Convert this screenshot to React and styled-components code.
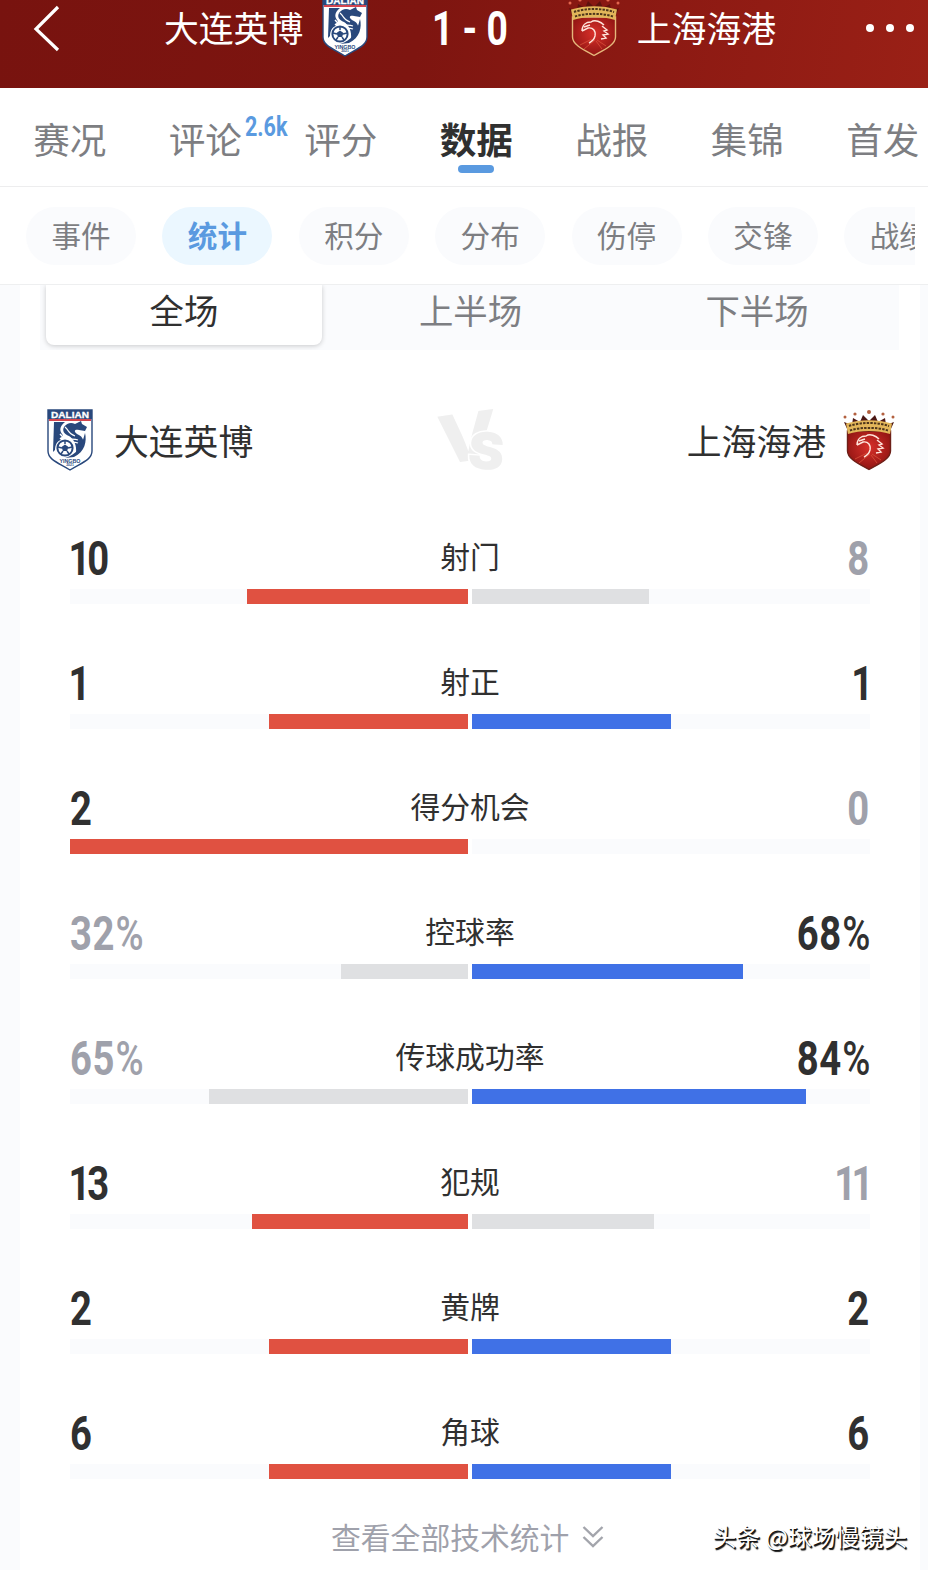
import React, { useState } from 'react';
import styled, { createGlobalStyle } from 'styled-components';

const COLORS = {
  dark: '#303030',
  grey: '#7d7e82',
  muted: '#9fa1ab',
  accent: '#5a9ae0',
  home: '#e05141',
  away: '#4071e6',
  weak: '#dfe0e2',
  soft: '#fafbfd',
};

const TABS = [
  { name: '赛况' },
  { name: '评论', count: '2.6k' },
  { name: '评分' },
  { name: '数据' },
  { name: '战报' },
  { name: '集锦' },
  { name: '首发' },
];

const FILTERS = ['事件', '统计', '积分', '分布', '伤停', '交锋', '战绩'];

const PERIODS = ['全场', '上半场', '下半场'];

const STATS = [
  { name: '射门', home: 10, away: 8 },
  { name: '射正', home: 1, away: 1 },
  { name: '得分机会', home: 2, away: 0 },
  { name: '控球率', home: 32, away: 68, percent: true },
  { name: '传球成功率', home: 65, away: 84, percent: true },
  { name: '犯规', home: 13, away: 11 },
  { name: '黄牌', home: 2, away: 2 },
  { name: '角球', home: 6, away: 6 },
];

const DalianCrest = () => (
  <CrestSvg width='46' height='62' viewBox='0 0 46 62'>
    <path d='M1 1H45V42C45 51 34 54 23 61C12 54 1 51 1 42Z' fill='#fff' stroke='#29487c' strokeWidth='1.4' />
    <path d='M1 1H45V10H1Z' fill='#29487c' />
    <path d='M2 10H44V12H2Z' fill='#d4454f' />
    <text x='23' y='8.6' textAnchor='middle' textLength='38' lengthAdjust='spacingAndGlyphs' fontFamily='Liberation Sans' fontWeight='700' fontSize='9' fill='#fff' stroke='#fff' strokeWidth='.3'>DALIAN</text>
    <path d='M7 13H18C13 17 12 21 15 25C18 28 12 27 14 31C10 32 8 36 8 41L6 43Z' fill='#29487c' />
    <path d='M17 18C20 14 24 13 28 15L34 12L35 15L40 18L38 22L32 21C28 20 26 22 30 25C37 28 38 33 34 39L29 44C30 37 27 30 22 27C17 25 15 22 17 18Z' fill='#29487c' />
    <path d='M13 25C18 32 25 29 31 31M13 29C18 35 25 32 31 34M18 18C23 22 20 24 28 27' fill='none' stroke='#fff' strokeWidth='1.3' />
    <path d='M38 24C40 32 38 43 27 48L18 49C30 45 34 39 38 24Z' fill='#29487c' />
    <circle cx='18' cy='39' r='7.6' fill='#fff' stroke='#29487c' strokeWidth='2' />
    <path d='M18 35.5L21.5 38L20 42H16L14.5 38Z' fill='#29487c' />
    <path d='M18 32V35M11 38L15 39M25 38L21 39M14 45L16 42M22 45L20 42' stroke='#29487c' strokeWidth='1.5' />
    <text x='23' y='53.5' textAnchor='middle' textLength='21' lengthAdjust='spacingAndGlyphs' fontFamily='Liberation Sans' fontWeight='700' fontSize='5' fill='#29487c'>YINGBO</text>
    <text x='23' y='57' textAnchor='middle' fontFamily='Liberation Sans' fontWeight='700' fontSize='3.4' fill='#29487c'>2021</text>
  </CrestSvg>
);

const PortCrest = ({ onDark }) => (
  <CrestSvg width='52' height='62' viewBox='0 0 52 62'>
    <defs>
      <radialGradient id='portShield' cx='50%' cy='42%' r='60%'>
        <stop offset='0' stopColor='#d8302a' />
        <stop offset='1' stopColor='#8f1412' />
      </radialGradient>
    </defs>
    <path d='M1 13L9 16L10 9L17 13L20 6L26 12L32 6L35 13L42 9L43 16L51 13L47 22H5Z' fill={onDark ? '#5e120e' : '#4b1714'} />
    <g fill={onDark ? '#e2664e' : '#b3603f'}>
      <circle cx='2' cy='8' r='1.5' />
      <circle cx='12' cy='5' r='1.6' />
      <circle cx='26' cy='3' r='2' />
      <circle cx='40' cy='5' r='1.6' />
      <circle cx='50' cy='8' r='1.5' />
    </g>
    <path d='M4.5 22H47.5V42C47.5 50 36 55 26 60.5C16 55 4.5 50 4.5 42Z' fill='url(#portShield)' stroke={onDark ? '#e5b77b' : '#6d2018'} strokeWidth='1.4' />
    <path d='M3 14.5C17 10 35 10 49 14.5L47 25C35 21 17 21 5 25Z' fill='#e2b65a' />
    <path d='M6 17C18 13 34 13 46 17M7 21.5C18 18 34 18 45 21.5' fill='none' stroke='#4d351b' strokeWidth='2' strokeDasharray='2.4 1.2' />
    <path d='M14 36C14 30 18 27 23 27C27 24 33 27 36 30M14 36L20 33C25 32 28 36 27 41C26 45 23 47 21 48M16 32L22 30M34 31L39 35L36 36L40 39L35 40L38 43L33 44' fill='none' stroke='#ffe5dc' strokeWidth='1.4' />
    <path d='M12 50L24 44M16 54L27 45M38 51L29 45M34 54L28 46' stroke='#d9513a' strokeWidth='.8' />
  </CrestSvg>
);

const Value = ({ value, percent, weak, right }) => (
  <ValueText $weak={weak} $right={right}>
    {String(value).split('').map((digit, index) => (
      <Digit key={index} $narrow={digit === '1'}>{digit}</Digit>
    ))}
    {percent && <Percent>%</Percent>}
  </ValueText>
);

const StatRow = ({ name, home, away, percent }) => {
  const total = percent ? 100 : home + away;

  return (
    <Row>
      <RowHead>
        <Value value={home} percent={percent} weak={home < away} />
        <RowName>{name}</RowName>
        <Value value={away} percent={percent} weak={away < home} right />
      </RowHead>
      <Bars>
        <Track $left>
          <Fill $color={home < away ? COLORS.weak : COLORS.home} style={{ width: `${(home / total) * 100}%` }} />
        </Track>
        <Track>
          <Fill $color={away < home ? COLORS.weak : COLORS.away} style={{ width: `${(away / total) * 100}%` }} />
        </Track>
      </Bars>
    </Row>
  );
};

const App = () => {
  const [tab, setTab] = useState(3);
  const [filter, setFilter] = useState(1);
  const [period, setPeriod] = useState(0);

  return (
    <Page>
      <GlobalStyle />
      <Header>
        <Back>
          <svg width='28' height='48' viewBox='0 0 28 48' fill='none' stroke='#fff' strokeWidth='3.2'>
            <path d='M25 3L3 25L25 46' />
          </svg>
        </Back>
        <HeaderTeam>
          <HeaderName>大连英博</HeaderName>
          <DalianCrest />
        </HeaderTeam>
        <Score>
          <ScoreText>1 - 0</ScoreText>
        </Score>
        <HeaderTeam>
          <PortCrest onDark />
          <HeaderName>上海海港</HeaderName>
        </HeaderTeam>
        <More>
          <Dot />
          <Dot />
          <Dot />
        </More>
      </Header>

      <Tabs>
        {TABS.map((item, index) => (
          <Tab key={item.name} $active={index === tab} onClick={() => setTab(index)}>
            {item.name}
            {item.count && <Count>{item.count}</Count>}
          </Tab>
        ))}
      </Tabs>

      <Filters>
        <FilterList>
          {FILTERS.map((item, index) => (
            <Pill key={item} $active={index === filter} onClick={() => setFilter(index)}>
              {item}
            </Pill>
          ))}
        </FilterList>
      </Filters>

      <Card>
        <Periods>
          {PERIODS.map((item, index) => (
            <Period key={item} $active={index === period} onClick={() => setPeriod(index)}>
              {item}
            </Period>
          ))}
        </Periods>

        <Teams>
          <Team>
            <DalianCrest />
            大连英博
          </Team>
          <svg width='72' height='72' viewBox='0 0 72 72' fill='#efefef' fontFamily='Inter, sans-serif' fontWeight='800'>
            <text transform='translate(4 61) rotate(-8) skewX(-4)' fontSize='66' textLength='60' lengthAdjust='spacingAndGlyphs'>V</text>
            <text transform='translate(32 64) rotate(4)' fontSize='51' textLength='36' lengthAdjust='spacingAndGlyphs' fontWeight='900' stroke='#fff' strokeWidth='3' paintOrder='stroke'>S</text>
          </svg>
          <Team $right>
            上海海港
            <PortCrest />
          </Team>
        </Teams>

        <Stats>
          {STATS.map((item) => (
            <StatRow key={item.name} {...item} />
          ))}
        </Stats>

        <ShowAll>
          查看全部技术统计
          <svg width='22' height='26' viewBox='0 0 22 26' fill='none' stroke='#a3a5ac' strokeWidth='2.4'>
            <path d='M1.5 4L11 13L20.5 4M1.5 14L11 23L20.5 14' />
          </svg>
        </ShowAll>
      </Card>

      <Watermark>头条 @球场慢镜头</Watermark>
    </Page>
  );
};

const GlobalStyle = createGlobalStyle`
  * {
    box-sizing: border-box;
  }

  body {
    margin: 0;
    background-color: ${COLORS.soft};
    font-family: 'Noto Sans CJK SC', sans-serif;
    color: ${COLORS.dark};
  }

  button {
    padding: 0;
    border: none;
    background: none;
    font-family: inherit;
    cursor: pointer;
  }
`;

const Page = styled.div`
  position: relative;
  width: 928px;
  height: 1570px;
  overflow: hidden;
`;

const CrestSvg = styled.svg`
  flex: none;
`;

const Header = styled.header`
  display: grid;
  grid-template-columns: 164px 204px 200px 208px 1fr;
  align-items: start;
  height: 88px;
  overflow: hidden;
  background: linear-gradient(100deg, #78130f 0%, #7e1510 45%, #8d1a13 72%, #9a2016 100%);
  color: #fff;
`;

const Back = styled.button`
  display: flex;
  padding: 4px 0 0 33px;
`;

const HeaderTeam = styled.div`
  display: flex;
  justify-content: space-between;
  align-items: center;
  margin-top: -5px;
  height: 62px;
  white-space: nowrap;
`;

const HeaderName = styled.span`
  padding-top: 2px;
  font-size: 34.8px;
  line-height: 60px;
`;

const Score = styled.div`
  display: flex;
  justify-content: center;
  height: 56px;
  padding-left: 3px;
`;

const ScoreText = styled.span`
  font: 700 49px/58px Roboto, sans-serif;
  white-space: nowrap;
  transform: scaleX(0.76);
`;

const More = styled.div`
  display: flex;
  justify-content: flex-end;
  gap: 12px;
  padding: 24px 14px 0 0;
`;

const Dot = styled.span`
  width: 8px;
  height: 8px;
  border-radius: 50%;
  background-color: #fff;
`;

const Tabs = styled.nav`
  display: flex;
  height: 99px;
  padding-left: 2px;
  overflow: hidden;
  background-color: #fff;
  border-bottom: 1px solid #ededee;
`;

const Tab = styled.button`
  position: relative;
  flex: none;
  width: 135.5px;
  padding-top: 4px !important;
  font-size: 36.6px;
  line-height: 94px;
  font-weight: ${({ $active }) => ($active ? 700 : 400)};
  color: ${({ $active }) => ($active ? COLORS.dark : COLORS.grey)};

  &:after {
    content: '';
    position: absolute;
    left: 50%;
    bottom: 13px;
    width: 36px;
    height: 8px;
    margin-left: -18px;
    border-radius: 4px;
    background-color: ${COLORS.accent};
    display: ${({ $active }) => ($active ? 'block' : 'none')};
  }
`;

const Count = styled.span`
  position: absolute;
  left: 107px;
  top: 22px;
  font: 700 28px/34px Roboto, sans-serif;
  color: ${COLORS.accent};
  transform: scaleX(0.77);
  transform-origin: left;
`;

const Filters = styled.div`
  height: 98px;
  padding: 20px 13px 0 26px;
  background-color: #fff;
  border-bottom: 1px solid #eeeff0;
`;

const FilterList = styled.div`
  display: flex;
  gap: 26.4px;
  overflow: hidden;
`;

const Pill = styled.button`
  flex: none;
  width: 110px;
  height: 58px;
  padding-bottom: 2px !important;
  border-radius: 29px;
  font-size: 29.6px;
  line-height: 56px;
  font-weight: ${({ $active }) => ($active ? 700 : 400)};
  color: ${({ $active }) => ($active ? COLORS.accent : COLORS.grey)};
  background-color: ${({ $active }) => ($active ? '#ebf7ff' : COLORS.soft)};
`;

const Card = styled.main`
  width: 900px;
  height: 1285px;
  margin-left: 20px;
  padding: 0 20px;
  background-color: #fff;
`;

const Periods = styled.div`
  display: grid;
  grid-template-columns: 276px 276px 276px;
  gap: 10.5px;
  width: 859px;
  height: 65px;
  padding: 0 5px 5px 6px;
  overflow: hidden;
  background-color: ${COLORS.soft};
`;

const Period = styled.button`
  padding-bottom: 11px !important;
  border-radius: 0 0 8px 8px;
  font-size: 34.4px;
  line-height: 49px;
  color: ${({ $active }) => ($active ? COLORS.dark : COLORS.grey)};
  background-color: ${({ $active }) => ($active ? '#fff' : 'transparent')};
  box-shadow: ${({ $active }) => ($active ? '0 1px 5px rgba(0, 0, 0, 0.2)' : 'none')};
`;

const Teams = styled.div`
  display: grid;
  grid-template-columns: 1fr 72px 1fr;
  align-items: center;
  height: 72px;
  margin-top: 54px;
  padding: 0 5px 0 7px;
`;

const Team = styled.div`
  display: flex;
  justify-content: ${({ $right }) => ($right ? 'flex-end' : 'flex-start')};
  align-items: center;
  gap: ${({ $right }) => ($right ? '17px' : '21px')};
  font-size: 34.8px;
  line-height: 62px;
`;

const Stats = styled.section`
  width: 800px;
  margin: 57px 0 0 30px;
`;

const Row = styled.div`
  height: 125px;
`;

const RowHead = styled.div`
  display: grid;
  grid-template-columns: 1fr auto 1fr;
  height: 56px;
`;

const ValueText = styled.span`
  justify-self: ${({ $right }) => ($right ? 'end' : 'start')};
  font: 700 49px/52px Roboto, sans-serif;
  color: ${({ $weak }) => ($weak ? COLORS.muted : COLORS.dark)};
  transform: scaleX(0.78);
  transform-origin: ${({ $right }) => ($right ? 'right' : 'left')};
`;

const Digit = styled.span`
  margin: ${({ $narrow }) => ($narrow ? '0 -4px 0 -2px' : '0 0.8px 0 0')};
`;

const Percent = styled.span`
  margin-left: 0.5px;
  font-weight: 500;
`;

const RowName = styled.span`
  font-size: 29.8px;
  line-height: 44px;
`;

const Bars = styled.div`
  display: grid;
  grid-template-columns: 1fr 1fr;
  gap: 4px;
`;

const Track = styled.div`
  display: flex;
  justify-content: ${({ $left }) => ($left ? 'flex-end' : 'flex-start')};
  height: 15px;
  background-color: ${COLORS.soft};
`;

const Fill = styled.div`
  background-color: ${({ $color }) => $color};
`;

const ShowAll = styled.button`
  display: flex;
  align-items: center;
  gap: 13px;
  margin: -19px 0 0 291px;
  font-size: 29.8px;
  line-height: 44px;
  color: ${COLORS.muted};
  white-space: nowrap;
`;

const Watermark = styled.div`
  position: absolute;
  right: 21px;
  bottom: 16px;
  font-size: 23.8px;
  line-height: 36px;
  color: #fff;
  text-shadow: 1px 1px 0 #111, 1.5px 1.5px 1px #111;
  white-space: nowrap;
`;

export default App;
